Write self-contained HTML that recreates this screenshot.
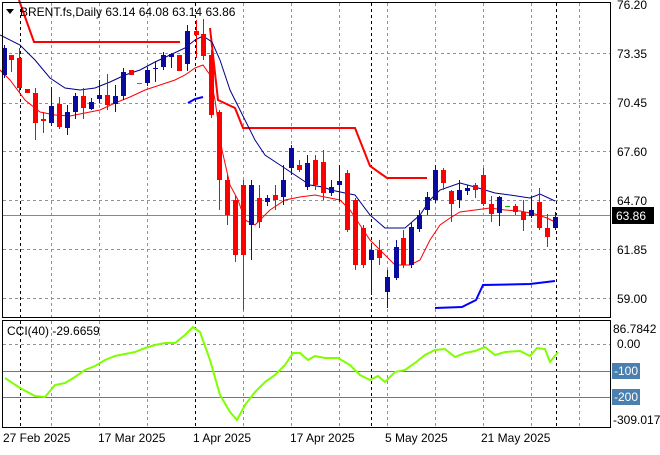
<!DOCTYPE html>
<html><head><meta charset="utf-8"><style>
body{margin:0;background:#fff;width:660px;height:450px;overflow:hidden;font-family:"Liberation Sans",sans-serif}
svg text{font-family:"Liberation Sans",sans-serif;font-size:12px;fill:#000}
</style></head><body>
<svg id="s" width="660" height="450" xmlns="http://www.w3.org/2000/svg">
<rect width="660" height="450" fill="#fff"/>
<g id="grid" stroke="#8a93a0" stroke-dasharray="3,3" stroke-width="1"></g>
<g id="vblack" stroke="#000" stroke-dasharray="3,3" stroke-width="1"></g>
<line x1="3" y1="215.5" x2="610" y2="215.5" stroke="#7a8a9a"/>
<line x1="3" y1="371.5" x2="610" y2="371.5" stroke="#4a7fae"/>
<line x1="3" y1="397.5" x2="610" y2="397.5" stroke="#4a7fae"/>
<polyline fill="none" stroke="#f00" stroke-width="2" points="19,0 34,42 180,42"/>
<polyline fill="none" stroke="#f00" stroke-width="2" points="210,28 218,100 235,108 243,128 355,128 370,166 387,178 427,178"/>
<polyline fill="none" stroke="#00f" stroke-width="2" points="188,103 195,99 203,97"/>
<polyline fill="none" stroke="#00f" stroke-width="2" points="435,308 462,307 476,300 483,285 530,284 555,281"/>
<polyline fill="none" stroke="#00008b" stroke-width="1" points="0,35 20,45 35,60 50,78 65,88 80,90 95,88 110,82 125,75 140,70 155,62 170,55 185,48 195,40 203,36 212,42 220,60 230,90 240,110 255,140 265,155 280,165 295,175 310,185 323,187 331,190 345,193 355,195 370,215 385,228 405,228 420,215 430,200 440,190 460,183 475,187 495,193 510,195 530,198 540,194 555,201"/>
<polyline fill="none" stroke="#f00" stroke-width="1" points="0,70 10,80 25,100 40,112 55,115 70,116 85,113 100,110 115,103 130,97 145,90 160,85 175,80 185,75 195,68 203,65 210,75 215,100 222,150 230,185 238,200 245,220 255,225 270,210 285,200 300,197 315,195 330,198 340,200 350,210 360,225 370,240 380,250 395,265 410,265 420,260 430,240 440,225 450,218 460,212 475,210 490,208 505,210 520,211 535,214 547,218 555,222"/>
<g id="c"></g>
<polyline fill="none" stroke="#7fff00" stroke-width="2" points="5,378 20,388 35,396 45,397 55,385 65,383 75,377 85,370 95,366 105,360 115,356 125,354 135,352 145,348 155,345 165,343 175,343 185,335 193,327 200,332 210,360 220,395 230,412 237,420 245,405 255,392 265,382 275,375 285,365 293,353 300,353 308,360 315,356 325,358 338,358 350,365 360,375 370,380 378,376 385,382 395,372 405,370 415,363 425,355 435,350 445,349 455,357 465,353 475,351 485,347 495,355 505,352 520,351 530,356 537,348 545,349 550,362 558,352"/>
<rect x="2.5" y="2.5" width="608" height="315" fill="none" stroke="#000"/>
<rect x="2.5" y="320.5" width="608" height="107" fill="none" stroke="#000"/>
<path d="M6,9 L14,9 L10,14Z" fill="#000"/>
<text x="20" y="16">BRENT.fs,Daily  63.14 64.08 63.14 63.86</text>
<text x="7" y="335">CCI(40) -29.6659</text>
<g font-size="12">
<text x="617" y="9">76.20</text>
<text x="617" y="58">73.35</text>
<text x="617" y="107">70.45</text>
<text x="617" y="156">67.60</text>
<text x="617" y="205">64.70</text>
<text x="617" y="254">61.85</text>
<text x="617" y="303">59.00</text>
<rect x="612" y="207" width="42" height="17" fill="#000"/>
<text x="616" y="220" style="fill:#fff">63.86</text>
<text x="613" y="333">86.7842</text>
<text x="617" y="348">0.00</text>
<rect x="612" y="363" width="28" height="16" fill="#4a7fae"/>
<text x="614" y="375" style="fill:#fff">-100</text>
<rect x="612" y="389" width="28" height="16" fill="#4a7fae"/>
<text x="614" y="401" style="fill:#fff">-200</text>
<text x="613" y="424">-309.017</text>
<text x="3" y="442">27 Feb 2025</text>
<text x="98" y="442">17 Mar 2025</text>
<text x="193" y="442">1 Apr 2025</text>
<text x="290" y="442">17 Apr 2025</text>
<text x="385" y="442">5 May 2025</text>
<text x="481" y="442">21 May 2025</text>
</g>
</svg>
<script>
var NS="http://www.w3.org/2000/svg";
function el(p,t,a){var e=document.createElementNS(NS,t);for(var k in a)e.setAttribute(k,a[k]);p.appendChild(e);return e;}
var g=document.getElementById("grid"),vb=document.getElementById("vblack");
[53,103,151,200,249,298].forEach(function(y){el(g,"line",{x1:3,y1:y+.5,x2:610,y2:y+.5});});
el(g,"line",{x1:3,y1:344.5,x2:610,y2:344.5});
for(var x=51;x<610;x+=48){if(Math.abs(x-195)<5)continue;el(g,"line",{x1:x+.5,y1:3,x2:x+.5,y2:317});el(g,"line",{x1:x+.5,y1:321,x2:x+.5,y2:427});}
[20,195,371,556].forEach(function(x){el(vb,"line",{x1:x+.5,y1:3,x2:x+.5,y2:317});el(vb,"line",{x1:x+.5,y1:321,x2:x+.5,y2:427});});
// x, o, c, hi, lo (pixel y)
var C=[[4,75,48,45,78],[11,55,60,55,72],[19,58,88,48,93],[27,89,93,89,93],[35,93,123,88,140],[43,119,121,112,133],[51,123,106,87,126],[59,104,127,97,129],[67,128,112,105,135],[75,112,96,93,119],[83,96,108,88,119],[91,109,102,98,110],[99,99,95,80,103],[107,95,105,74,110],[115,104,96,85,112],[123,96,72,68,100],[131,70,75,70,75],[139,83,83,83,83],[147,83,70,67,86],[155,69,68,61,82],[163,67,55,52,70],[171,57,54,53,68],[179,55,71,55,71],[187,64,31,25,71],[196,31,35,20,58],[203,34,56,19,60],[211,55,115,50,118],[219,112,180,110,210],[227,180,215,175,225],[235,200,255,195,262],[243,185,255,180,310],[251,225,185,180,260],[259,198,222,185,228],[267,202,198,195,206],[275,195,200,185,210],[283,197,180,165,205],[291,168,148,145,175],[299,165,170,160,172],[307,187,163,155,190],[315,160,185,155,190],[323,162,193,150,200],[331,193,187,180,196],[339,185,181,165,202],[347,173,230,170,232],[355,200,265,198,270],[363,228,265,225,268],[371,260,250,243,295],[379,250,258,240,265],[387,292,277,270,308],[396,278,247,240,280],[403,238,265,230,268],[411,265,227,222,268],[419,229,215,210,232],[427,210,197,192,215],[435,200,170,165,203],[443,170,183,168,190],[451,191,204,190,222],[459,200,190,180,208],[467,191,188,185,195],[475,185,190,183,198],[483,175,204,168,206],[491,204,214,196,222],[499,213,197,196,226],[507,206,206,206,206],[515,206,212,204,215],[523,212,220,200,231],[531,216,210,196,218],[539,202,228,188,230],[547,228,237,214,247],[555,228,217,212,230]];
var cg=document.getElementById("c");
C.forEach(function(d){var x=d[0],o=d[1],c=d[2],h=d[3],l=d[4];
 var col=(x==139||x==507)?"#00c000":(c<o?"#0a0a9e":"#f00");
 el(cg,"line",{x1:x+.5,y1:h,x2:x+.5,y2:l,stroke:col});
 var t=Math.min(o,c),b=Math.max(o,c);
 el(cg,"rect",{x:x-2,y:t,width:5,height:Math.max(1,b-t),fill:col});});
</script>
</body></html>
